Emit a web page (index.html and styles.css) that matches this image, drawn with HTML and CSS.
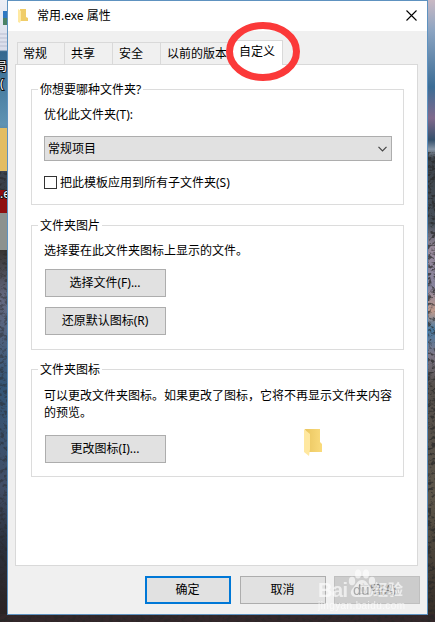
FILE: index.html
```html
<!DOCTYPE html>
<html lang="zh-CN">
<head>
<meta charset="utf-8">
<title>常用.exe 属性</title>
<link rel="stylesheet" href="styles.css">
</head>
<body>
<svg class="wallpaper" viewBox="0 0 435 622" aria-hidden="true">
  <defs>
    <linearGradient id="left" x1="0" y1="0" x2="0" y2="1">
      <stop offset="0" stop-color="#eceef5"/><stop offset=".08" stop-color="#d8dcea"/>
      <stop offset=".083" stop-color="#35688f"/><stop offset=".2" stop-color="#5f93b3"/>
      <stop offset=".27" stop-color="#3b4450"/><stop offset=".4" stop-color="#35322f"/>
      <stop offset=".48" stop-color="#656a82"/><stop offset=".62" stop-color="#335576"/>
      <stop offset=".78" stop-color="#414e66"/><stop offset=".87" stop-color="#2c3340"/>
      <stop offset="1" stop-color="#2b2020"/>
    </linearGradient>
    <linearGradient id="right" x1="0" y1="0" x2="0" y2="1">
      <stop offset="0" stop-color="#c9b9c4"/><stop offset=".05" stop-color="#8ba4c2"/>
      <stop offset=".14" stop-color="#3c6d96"/><stop offset=".19" stop-color="#80698c"/>
      <stop offset=".225" stop-color="#34506c"/><stop offset=".24" stop-color="#8795a6"/>
      <stop offset=".255" stop-color="#3b4148"/><stop offset=".36" stop-color="#47505a"/>
      <stop offset=".4" stop-color="#9a8b9c"/><stop offset=".46" stop-color="#86829c"/>
      <stop offset=".5" stop-color="#c09a8c"/><stop offset=".53" stop-color="#4a7ba2"/>
      <stop offset=".57" stop-color="#7d7686"/><stop offset=".62" stop-color="#544e4a"/>
      <stop offset=".8" stop-color="#5c5549"/><stop offset="1" stop-color="#332b25"/>
    </linearGradient>
    <filter id="rough" x="0" y="0" width="1" height="1">
      <feTurbulence type="fractalNoise" baseFrequency=".22 .32" numOctaves="3" seed="4"/>
      <feColorMatrix values="0 0 0 0 .02  0 0 0 0 .02  0 0 0 0 .02  5 0 0 0 -2.4"/>
    </filter>
  </defs>
  <rect width="218" height="622" fill="url(#left)"/>
  <rect x="218" width="217" height="622" fill="url(#right)"/>
  <rect y="614" width="435" height="8" fill="#33272a"/>
  <path d="M0 34h7M0 38h7M0 42h7M0 46h7" stroke="#b9bdcf"/>
  <path d="M3 11h4v14H3z" fill="#2f78c2"/><path d="M3 18h4v7H3z" fill="#4b8265"/>
  <rect y="128" width="7" height="43" fill="#e3bd62"/>
  <rect y="190" width="7" height="23" fill="#8f1010"/>
  <rect y="213" width="7" height="37" fill="#8c918e"/>
  <rect y="250" width="7" height="372" filter="url(#rough)" opacity=".45"/>
  <rect y="172" width="7" height="18" filter="url(#rough)" opacity=".6"/>
  <rect x="428" y="152" width="7" height="470" filter="url(#rough)" opacity=".7"/>
  <rect y="615" width="435" height="7" filter="url(#rough)" opacity=".6"/>
  <g class="wallpaper-label"><text x="-5" y="71">局</text><text x="0" y="88">(</text><text x="0" y="198">.e</text></g>
</svg>

<main class="window">
  <header class="titlebar">
    <svg class="title-icon" viewBox="0 0 10 14"><path d="M2 0h6v8l2 1v3H2z" fill="#f0cd69"/><path d="M0 0l3 2v9l-1 3-2-1z" fill="#ffe9a2"/></svg>
    <h1>常用.exe 属性</h1>
    <svg class="close" viewBox="0 0 11 11"><path d="M.5.5l10 10M10.5.5l-10 10"/></svg>
  </header>

  <nav class="tabs">
    <span class="tab">常规</span><span class="tab">共享</span><span class="tab">安全</span><span class="tab wide">以前的版本</span><span class="tab active">自定义<svg class="ring" viewBox="0 0 74 59"><ellipse cx="37" cy="29.5" rx="33.5" ry="26"/></svg></span>
  </nav>

  <section class="panel">
    <fieldset class="group kind">
      <legend>你想要哪种文件夹?</legend>
      <p>优化此文件夹(T):</p>
      <div class="select"><span>常规项目</span><svg viewBox="0 0 9 6"><path d="M.5.8l4 4 4-4"/></svg></div>
      <label class="check"><span class="box"></span>把此模板应用到所有子文件夹(S)</label>
    </fieldset>
    <fieldset class="group picture">
      <legend>文件夹图片</legend>
      <p>选择要在此文件夹图标上显示的文件。</p>
      <button>选择文件(F)...</button>
      <button>还原默认图标(R)</button>
    </fieldset>
    <fieldset class="group icon">
      <legend>文件夹图标</legend>
      <p>可以更改文件夹图标。如果更改了图标，它将不再显示文件夹内容的预览。</p>
      <div class="icon-row">
        <button>更改图标(I)...</button>
        <svg class="folder" viewBox="0 0 19 28">
          <defs><linearGradient id="fold"><stop stop-color="#eac660"/><stop offset="1" stop-color="#fadb7c"/></linearGradient></defs>
          <path d="M1 0h15v13l2 2v8H5z" fill="url(#fold)"/><path d="M0 0l6 5v15l-1 7-5-4z" fill="#ffe8a0"/>
        </svg>
      </div>
    </fieldset>
  </section>

  <footer class="actions">
    <button class="primary">确定</button>
    <button>取消</button>
    <button class="disabled">应用(A)</button>
    <svg class="watermark" viewBox="0 0 92 44" aria-hidden="true">
      <text class="brand" x="1" y="29" textLength="30">Bai</text>
      <g><ellipse cx="35" cy="13" rx="3.2" ry="4.3"/><ellipse cx="41" cy="6" rx="3" ry="4.5"/><ellipse cx="49" cy="6" rx="3" ry="4.5"/><ellipse cx="55" cy="13" rx="3.2" ry="4.3"/><path d="M45 12c-5 0-6 5-9 8-4 4-2 9 3 9h12c5 0 7-5 3-9-3-3-4-8-9-8z"/></g>
      <text class="du" x="36" y="27">du</text>
      <text class="cn" x="56" y="27" textLength="30">经验</text>
      <text class="url" x="1" y="41" textLength="87">jingyan.baidu.com</text>
    </svg>
  </footer>
</main>
</body>
</html>
```
FILE: styles.css
```css
* { box-sizing: border-box; }

body {
  margin: 0;
  width: 435px;
  height: 622px;
  overflow: hidden;
  position: relative;
  padding-left: 7px;
  font: 12px/17px "Noto Sans", "Noto Sans CJK SC", sans-serif;
  color: #000;
}

.wallpaper {
  position: absolute;
  left: 0;
  top: 0;
  width: 435px;
  height: 622px;
  z-index: -1;
}

.wallpaper-label {
  font-size: 12px;
  fill: #fff;
  stroke: #111;
  stroke-width: 2px;
  paint-order: stroke;
}

.window {
  width: 421px;
  height: 615px;
  border: 1px solid #5e92c0;
  background: #f0f0f0;
  display: flex;
  flex-direction: column;
}

.titlebar {
  height: 30px;
  background: #fff;
  display: flex;
  align-items: center;
  padding: 0 10px 1px 10px;
}

.title-icon { width: 10px; height: 14px; }

h1 {
  flex: 1;
  margin: 0 0 0 9px;
  font-size: 12px;
  font-weight: 400;
}

.close {
  width: 11px;
  height: 11px;
  fill: none;
  stroke: #000;
  stroke-width: 1.1;
}

.tabs {
  height: 33px;
  padding: 9px 0 0 9px;
  display: flex;
  align-items: flex-end;
}

.tab {
  width: 48px;
  height: 22px;
  padding: 2px 0 0 6px;
  border: 1px solid #d9d9d9;
  border-width: 1px 0 0 1px;
  white-space: nowrap;
}

.tab:first-child { width: 47px; padding-left: 5px; }
.tab.wide { width: 72px; }

.tab.active {
  position: relative;
  width: 51px;
  height: 25px;
  margin-bottom: -1px;
  padding: 2px 0 0 7px;
  border-width: 1px 1px 0 0;
  background: #fff;
}

.ring {
  position: absolute;
  left: -6px;
  top: -19px;
  width: 74px;
  height: 59px;
  fill: none;
  stroke: #fb3939;
  stroke-width: 7;
  z-index: 1;
}

.panel {
  width: 403px;
  height: 502px;
  margin-left: 7px;
  padding: 24px 13px 0 15px;
  border: 1px solid #d9d9d9;
  background: #fff;
}

.group {
  position: relative;
  margin: 0;
  padding: 16px 11px 0 12px;
  border: 1px solid #dcdcdc;
}

.kind { height: 116px; }
.picture { height: 125px; margin-top: 20px; }
.icon { height: 108px; margin-top: 19px; padding-top: 17px; }

legend {
  position: absolute;
  left: 6px;
  top: -9px;
  padding: 0 2px;
  background: #fff;
}

p { margin: 0; }

.select {
  height: 25px;
  margin-top: 13px;
  padding: 0 4px 0 3px;
  border: 1px solid #adadad;
  background: #e1e1e1;
  display: flex;
  align-items: center;
  justify-content: space-between;
}

.select svg {
  width: 9px;
  height: 6px;
  fill: none;
  stroke: #444;
  stroke-width: 1.2;
}

.check {
  display: flex;
  align-items: center;
  gap: 3px;
  margin-top: 13px;
}

.box {
  width: 13px;
  height: 13px;
  border: 1px solid #333;
  background: #fff;
}

button {
  display: block;
  width: 121px;
  height: 28px;
  margin: 0;
  padding: 0 1px 2px 0;
  border: 1px solid #adadad;
  background: #e1e1e1;
  color: #000;
  font: inherit;
}

.picture button { margin: 10px 0 0 1px; }
.picture button + button { margin-top: 10px; }

.icon-row {
  display: flex;
  align-items: flex-start;
  justify-content: space-between;
  margin-top: 14px;
  padding: 0 69px 0 1px;
}

.folder { width: 19px; height: 28px; margin-top: -6px; }

.actions {
  position: relative;
  display: flex;
  gap: 9px;
  padding: 10px 0 0 137px;
}

.actions button { width: 86px; }
.actions .primary { border: 2px solid #0078d7; }
.actions .disabled { margin-left: -1px; background: #ccc; border-color: #bfbfbf; color: #838383; }

.watermark {
  position: absolute;
  left: 309px;
  top: 2px;
  width: 92px;
  height: 44px;
  fill: #fff;
  opacity: .65;
}

.brand { font: bold 20px "Liberation Sans", sans-serif; }
.du { font: 15px "Liberation Sans", sans-serif; fill: #999; }
.cn { font: bold 15px "Noto Sans CJK SC", sans-serif; }
.url { font: 10px "Liberation Sans", sans-serif; }
```
